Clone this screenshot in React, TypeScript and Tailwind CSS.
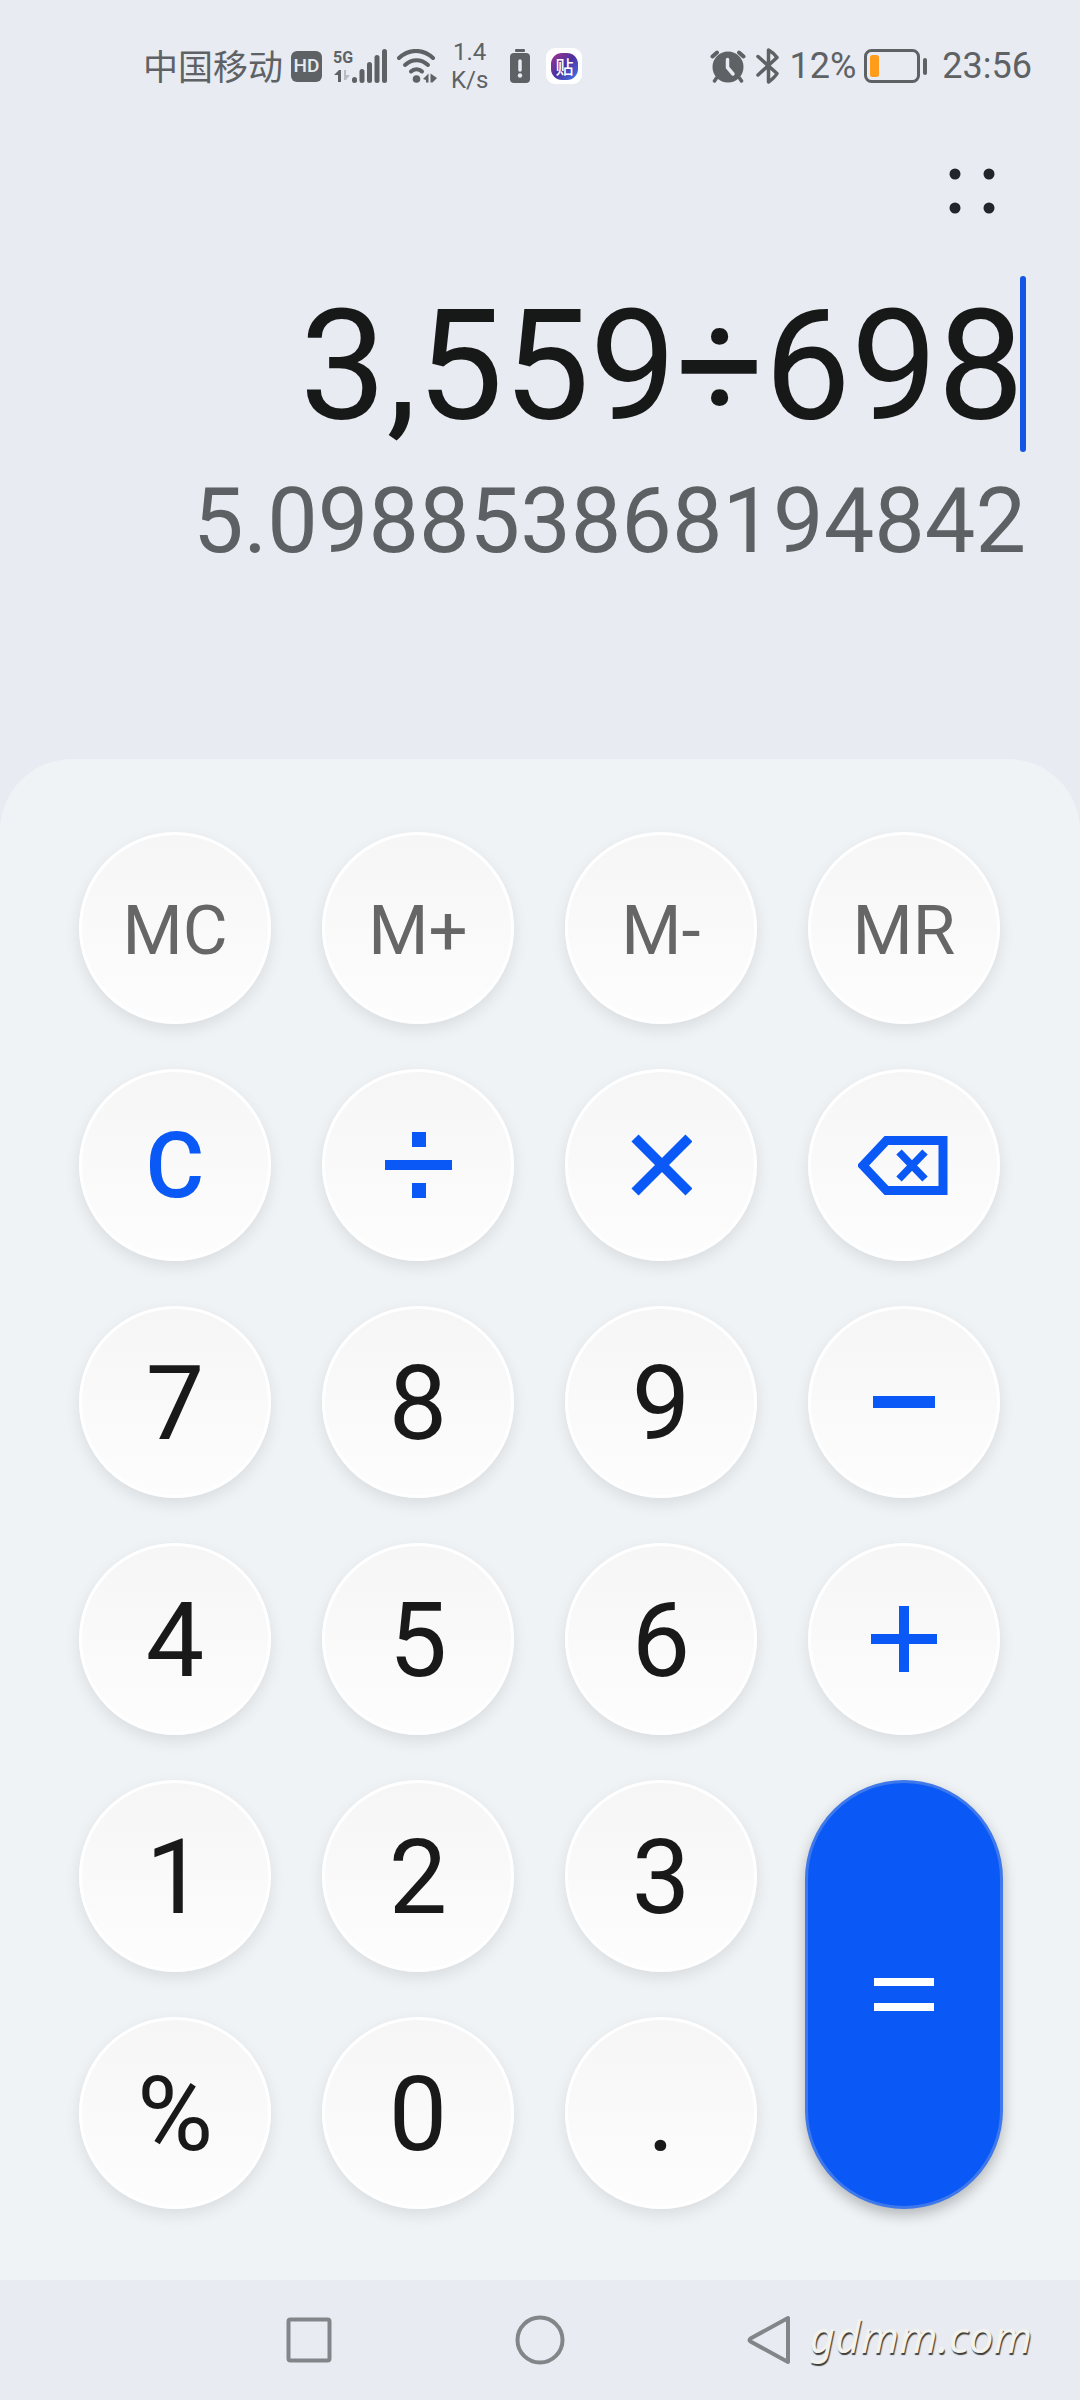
import type { ReactNode } from "react";

type Tone = "memory" | "accent" | "digit";

interface KeyProps {
  label: string;
  tone: Tone;
  icon?: ReactNode;
}

const toneClasses: Record<Tone, string> = {
  memory: "text-[69px] text-[#666666]",
  accent: "text-[90px] font-medium text-[#0a59f7]",
  digit: "text-[104px] text-[#191919]",
};

function DivideIcon() {
  return (
    <svg className="h-[66px] w-[68px]" viewBox="0 0 68 66" fill="currentColor">
      <rect x="28" y="0" width="14" height="15" />
      <rect x="1" y="28" width="67" height="10" />
      <rect x="28" y="51" width="14" height="15" />
    </svg>
  );
}

function TimesIcon() {
  return (
    <svg className="h-[62px] w-[62px]" viewBox="0 0 62 62" fill="none" stroke="currentColor" strokeWidth="10">
      <path d="M5 4L59 58M59 4L5 58" />
    </svg>
  );
}

function BackspaceIcon() {
  return (
    <svg className="h-[62px] w-[92px]" viewBox="0 0 92 62" fill="none" stroke="currentColor">
      <path d="M28.500 6.500H85V56.500H28.500L5 31.500Z" strokeWidth="9" />
      <path d="M41 18L67 45M67 18L41 45" strokeWidth="7.500" />
    </svg>
  );
}

function MinusIcon() {
  return (
    <svg className="h-3 w-[62px]" viewBox="0 0 62 12" fill="currentColor">
      <rect width="62" height="12" />
    </svg>
  );
}

function PlusIcon() {
  return (
    <svg className="h-[66px] w-[66px]" viewBox="0 0 66 66" fill="currentColor">
      <rect x="0" y="28" width="66" height="10" />
      <rect x="28" y="0" width="10" height="66" />
    </svg>
  );
}

const keys: KeyProps[] = [
  { label: "MC", tone: "memory" },
  { label: "M+", tone: "memory" },
  { label: "M-", tone: "memory" },
  { label: "MR", tone: "memory" },
  { label: "C", tone: "accent" },
  { label: "÷", tone: "accent", icon: <DivideIcon /> },
  { label: "×", tone: "accent", icon: <TimesIcon /> },
  { label: "Backspace", tone: "accent", icon: <BackspaceIcon /> },
  { label: "7", tone: "digit" },
  { label: "8", tone: "digit" },
  { label: "9", tone: "digit" },
  { label: "−", tone: "accent", icon: <MinusIcon /> },
  { label: "4", tone: "digit" },
  { label: "5", tone: "digit" },
  { label: "6", tone: "digit" },
  { label: "+", tone: "accent", icon: <PlusIcon /> },
  { label: "1", tone: "digit" },
  { label: "2", tone: "digit" },
  { label: "3", tone: "digit" },
  { label: "=", tone: "accent" },
  { label: "%", tone: "digit" },
  { label: "0", tone: "digit" },
  { label: ".", tone: "digit" },
];

function Key({ label, tone, icon }: KeyProps) {
  return (
    <button
      type="button"
      aria-label={label}
      className={`flex aspect-square w-full items-center justify-center rounded-full border-[3px] border-white bg-linear-to-b from-[#f6f6f6] to-[#fdfdfd] leading-none shadow-[0_6px_16px_rgba(0,0,0,0.09)] ${toneClasses[tone]}`}
    >
      {icon ?? <span className="pt-1">{label}</span>}
    </button>
  );
}

function EqualsKey() {
  return (
    <button
      type="button"
      aria-label="="
      className="row-span-2 -mx-[3px] flex items-center justify-center rounded-full border-[3px] border-[#3f78ea] bg-[#0a59f7] text-white shadow-[0_6px_14px_rgba(0,0,0,0.25)]"
    >
      <svg className="h-[34px] w-[60px]" viewBox="0 0 60 34" fill="currentColor">
        <rect y="0" width="60" height="8" />
        <rect y="25" width="60" height="8" />
      </svg>
    </button>
  );
}

function SignalIcon() {
  return (
    <svg className="h-[34px] w-[35px]" viewBox="0 0 35 34" fill="currentColor">
      <rect x="0" y="28" width="5" height="6" rx="2.500" />
      <rect x="7.500" y="20" width="5" height="14" rx="2.500" />
      <rect x="15" y="13" width="5" height="21" rx="2.500" />
      <rect x="22.500" y="6" width="5" height="28" rx="2.500" />
      <rect x="30" y="0" width="5" height="34" rx="2.500" />
    </svg>
  );
}

function NetworkType() {
  return (
    <div className="flex w-[18px] flex-col items-center">
      <span className="text-[16px] leading-[18px] font-bold">5G</span>
      <svg className="h-4 w-[18px]" viewBox="0 0 18 16">
        <path d="M7 3V15H4V8H0L5 3Z" fill="currentColor" />
        <path d="M10 3H12V8H16L12 13H10Z" fill="#b9bdc3" />
      </svg>
    </div>
  );
}

function WifiIcon() {
  return (
    <svg className="h-[34px] w-10" viewBox="0 0 40 34" fill="none" stroke="currentColor" strokeWidth="4" strokeLinecap="round">
      <path d="M2 9C12 -0.500 26 -0.500 36 9" />
      <path d="M8 16C15 9.500 24 9.500 31 16" />
      <path d="M14 22.500C17 19.500 22 19.500 25 22.500" />
      <circle cx="19.500" cy="30" r="3.800" fill="currentColor" stroke="none" />
      <path d="M26 30L31.500 24.500V33.500H29V31Z" fill="currentColor" stroke="none" />
      <path d="M33.500 24.500L40 29L35.500 33.500H33.500Z" fill="currentColor" stroke="none" />
    </svg>
  );
}

function BatteryAlertIcon() {
  return (
    <svg className="h-[34px] w-5" viewBox="0 0 20 34" fill="currentColor">
      <rect x="5" y="0" width="10" height="3" rx="1" />
      <rect x="0" y="4" width="20" height="30" rx="4" />
      <path d="M10 12V21" stroke="#e8ebf2" strokeWidth="3.500" strokeLinecap="round" />
      <circle cx="10" cy="26.500" r="2.200" fill="#e8ebf2" />
    </svg>
  );
}

function AlarmIcon() {
  return (
    <svg className="h-[34px] w-9" viewBox="0 0 36 34" fill="none" stroke="currentColor" strokeLinecap="round">
      <circle cx="18" cy="18" r="15.500" fill="currentColor" stroke="none" />
      <path d="M2.500 7.500L7 3.500M33.500 7.500L29 3.500" strokeWidth="4" />
      <path d="M6.500 29L4.500 32M29.500 29L31.500 32" strokeWidth="3.500" />
      <path d="M17.500 10.500V18.500L23 25" stroke="#e8ebf2" strokeWidth="3.500" strokeLinejoin="round" />
    </svg>
  );
}

function BluetoothIcon() {
  return (
    <svg className="h-9 w-6" viewBox="0 0 24 36" fill="none" stroke="currentColor" strokeWidth="3.500" strokeLinecap="round" strokeLinejoin="round">
      <path d="M2 8.500L21 25.500C19 29 16 31.500 12.500 34V2C16 4 19 6.500 21 9.500L2 27" />
    </svg>
  );
}

function BatteryIcon() {
  return (
    <svg className="h-[34px] w-16" viewBox="0 0 64 34" fill="none">
      <rect x="1.500" y="1.500" width="53" height="31" rx="6" stroke="currentColor" strokeWidth="3" />
      <rect x="6" y="6" width="9" height="22" rx="2.500" fill="#ff9c1a" />
      <rect x="59" y="9" width="4" height="17" rx="2" fill="currentColor" />
    </svg>
  );
}

function StatusBar() {
  return (
    <header className="flex h-[132px] items-center justify-between pr-12 pl-[143px] text-[#5e6265]">
      <div className="flex items-center">
        <span className="pb-1 font-['Noto_Sans_CJK_SC',sans-serif] text-[35px] leading-none">中国移动</span>
        <span className="ml-2 flex h-[31px] w-[31px] items-center justify-center rounded-[6px] bg-[#5e6265] text-[19px] font-medium text-[#e8ebf2]">
          HD
        </span>
        <div className="ml-3 flex items-center">
          <NetworkType />
          <SignalIcon />
        </div>
        <div className="ml-2.5">
          <WifiIcon />
        </div>
        <div className="ml-3.5 text-center text-[24px] leading-[28px]">
          <p>1.4</p>
          <p>K/s</p>
        </div>
        <div className="ml-[22px]">
          <BatteryAlertIcon />
        </div>
        <div className="ml-4 flex h-9 w-9 items-center justify-center rounded-[9px] bg-white">
          <span className="flex h-[27px] w-[27px] items-center justify-center rounded-[11px] bg-linear-to-br from-[#a52b8a] via-[#4a2fa0] to-[#2f7bf0] font-['Noto_Sans_CJK_SC',sans-serif] text-[18px] leading-none font-medium text-white">
            贴
          </span>
        </div>
      </div>
      <div className="flex items-center text-[36px] leading-none">
        <AlarmIcon />
        <div className="ml-2.5">
          <BluetoothIcon />
        </div>
        <span className="ml-2.5">12%</span>
        <div className="ml-2">
          <BatteryIcon />
        </div>
        <span className="ml-3.5">23:56</span>
      </div>
    </header>
  );
}

function Display() {
  return (
    <main className="flex flex-1 flex-col pr-[54px]">
      <button type="button" aria-label="More options" className="mt-9 mr-[31px] self-end">
        <svg className="h-[46px] w-[46px]" viewBox="0 0 46 46" fill="#22252a">
          <circle cx="6" cy="6" r="5.500" />
          <circle cx="40" cy="6" r="5.500" />
          <circle cx="6" cy="40" r="5.500" />
          <circle cx="40" cy="40" r="5.500" />
        </svg>
      </button>
      <div className="mt-[62px] flex">
        <input
          type="text"
          readOnly
          aria-label="Expression"
          value="3,559÷698"
          className="h-44 min-w-0 flex-1 bg-transparent pt-1 text-right text-[154px] leading-none text-[#171818] outline-none"
        />
        <span className="-ml-1 h-44 w-1.5 rounded-full bg-[#1356e6]" />
      </div>
      <output className="mt-5 mb-6 block text-right text-[90px] leading-[100px] text-[#5d6163]">5.098853868194842</output>
    </main>
  );
}

function Keypad() {
  return (
    <section className="grid grid-cols-4 gap-x-[51px] gap-y-[45px] rounded-t-[72px] bg-[#eff3f6] pt-[73px] pr-20 pb-[71px] pl-[79px]">
      {keys.map((key) =>
        key.label === "=" ? <EqualsKey key={key.label} /> : <Key key={key.label} {...key} />,
      )}
    </section>
  );
}

function NavBar() {
  return (
    <nav className="grid h-[120px] grid-cols-[1fr_auto_1fr] items-center text-[#828689]">
      <button type="button" aria-label="Recent apps" className="mr-[183px] justify-self-end">
        <svg className="h-[46px] w-[46px]" viewBox="0 0 46 46" fill="none" stroke="currentColor" strokeWidth="4">
          <rect x="2.500" y="2.500" width="41" height="41" rx="2" />
        </svg>
      </button>
      <button type="button" aria-label="Home">
        <svg className="h-[50px] w-[50px]" viewBox="0 0 50 50" fill="none" stroke="currentColor" strokeWidth="4">
          <circle cx="25" cy="25" r="22.500" />
        </svg>
      </button>
      <div className="flex items-center justify-between pr-12 pl-[182px]">
        <button type="button" aria-label="Back">
          <svg className="h-[50px] w-11" viewBox="0 0 44 50" fill="none" stroke="currentColor" strokeWidth="4" strokeLinejoin="round">
            <path d="M41 3V47L3.500 26.500Q1.500 25 3.500 23.500Z" />
          </svg>
        </button>
        <span className="pb-2 font-['Noto_Sans',sans-serif] text-[44px] leading-none text-[#f2f2ef] italic [text-shadow:1px_2px_1px_#3c3c38]">
          gdmm.com
        </span>
      </div>
    </nav>
  );
}

function App() {
  return (
    <div className="flex min-h-screen flex-col bg-[#e8ebf2] font-[Roboto,sans-serif]">
      <StatusBar />
      <Display />
      <Keypad />
      <NavBar />
    </div>
  );
}

export default App;
